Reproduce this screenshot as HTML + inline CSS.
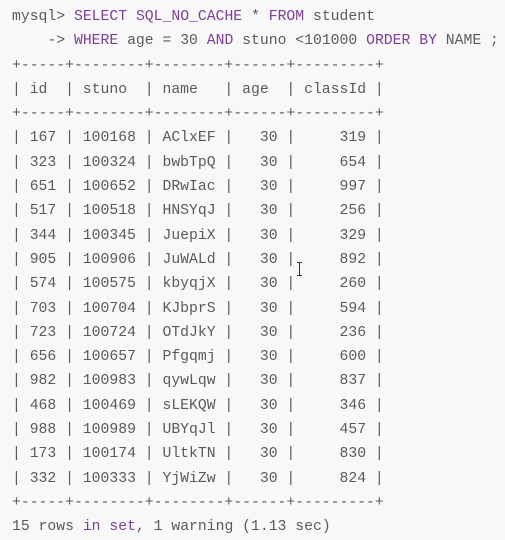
<!DOCTYPE html>
<html><head><meta charset="utf-8"><style>
html,body{margin:0;padding:0;background:#f8f8f8;width:505px;height:535px;overflow:hidden}
pre{margin:0;position:absolute;left:12px;top:5px;font-family:"Liberation Mono",monospace;font-size:14.75px;line-height:24.3px;color:#5a5a5a;white-space:pre}
.k{color:#7b3f95}
.cur{position:absolute;left:299px;top:262px;width:1px;height:14px;background:#333}
.cur:before,.cur:after{content:"";position:absolute;left:-2px;width:5px;height:1px;background:#333}
.cur:before{top:0}.cur:after{bottom:0}
</style></head><body>
<pre>mysql&gt; <span class="k">SELECT</span> <span class="k">SQL_NO_CACHE</span> * <span class="k">FROM</span> student
    -&gt; <span class="k">WHERE</span> age = 30 <span class="k">AND</span> stuno &lt;101000 <span class="k">ORDER</span> <span class="k">BY</span> NAME ;
+-----+--------+--------+------+---------+
| id  | stuno  | name   | age  | classId |
+-----+--------+--------+------+---------+
| 167 | 100168 | AClxEF |   30 |     319 |
| 323 | 100324 | bwbTpQ |   30 |     654 |
| 651 | 100652 | DRwIac |   30 |     997 |
| 517 | 100518 | HNSYqJ |   30 |     256 |
| 344 | 100345 | JuepiX |   30 |     329 |
| 905 | 100906 | JuWALd |   30 |     892 |
| 574 | 100575 | kbyqjX |   30 |     260 |
| 703 | 100704 | KJbprS |   30 |     594 |
| 723 | 100724 | OTdJkY |   30 |     236 |
| 656 | 100657 | Pfgqmj |   30 |     600 |
| 982 | 100983 | qywLqw |   30 |     837 |
| 468 | 100469 | sLEKQW |   30 |     346 |
| 988 | 100989 | UBYqJl |   30 |     457 |
| 173 | 100174 | UltkTN |   30 |     830 |
| 332 | 100333 | YjWiZw |   30 |     824 |
+-----+--------+--------+------+---------+
15 rows <span class="k">in</span> <span class="k">set</span>, 1 warning (1.13 sec)</pre>
<div class="cur"></div>
</body></html>
